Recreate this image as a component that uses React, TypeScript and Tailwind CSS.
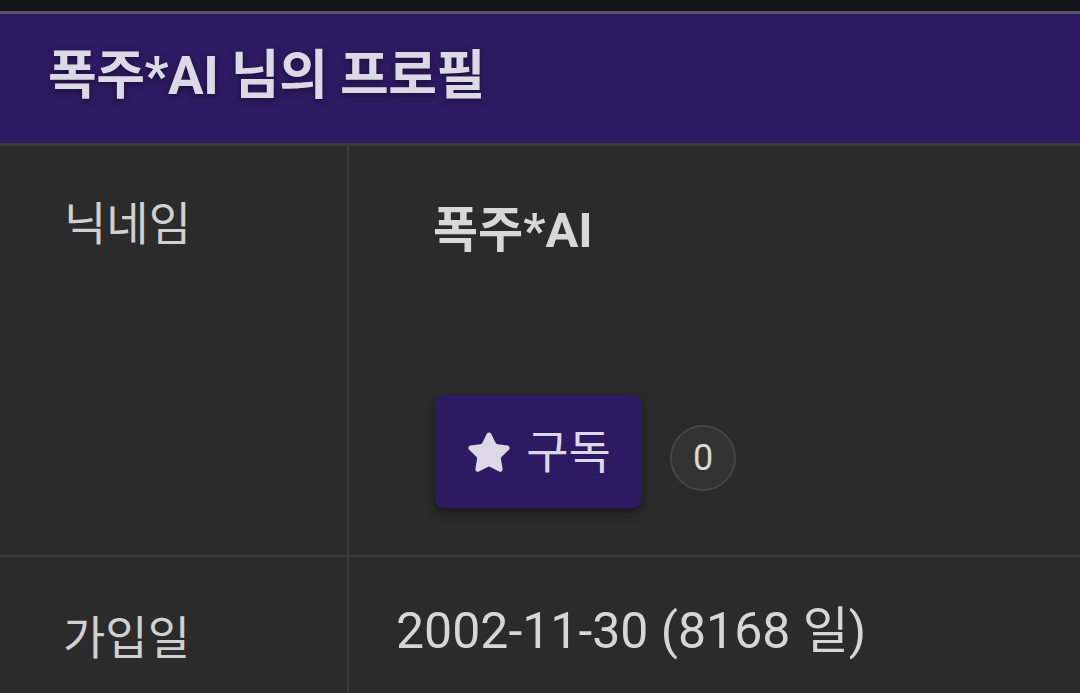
import { Star } from "lucide-react";

export default function App() {
    return (
        <div className="w-[1080px] h-[693px] overflow-hidden bg-[#2b2b2b] text-[#d6d6d6]" style={{ fontFamily: 'Roboto, "Noto Sans CJK KR", sans-serif' }}>
            <div className="h-[11px] bg-[#141518]" />
            <div className="h-[3px] bg-[#57536b]" />
            {/* header */}
            <div className="h-[132px] bg-[#2e1a62] border-b-[3px] border-[#3a3a3d] flex items-center px-[48px] pb-[4px]">
                <h1 className="text-[53px] font-bold text-[#dcd9e6] tracking-[-0.5px] [text-shadow:0_2px_6px_rgba(0,0,0,0.45)]">폭주*AI 님의 프로필</h1>
            </div>

            {/* nickname row */}
            <div className="flex h-[411px] border-b-[2px] border-[#3a3a3a]">
                <div className="w-[349px] border-r-[2px] border-[#3a3a3a] pl-[64px] pt-[48px] text-[46px] leading-[60px] text-[#d0d0d0]">닉네임</div>
                <div className="flex-1 pl-[84px] pt-[55px]">
                    <div className="text-[49px] font-bold leading-[60px] text-[#d8d8d8]">폭주*AI</div>
                    <div className="flex items-start gap-[28px] mt-[134px] ml-[2px]">
                        <button className="w-[207px] h-[113px] rounded-[9px] bg-[#2e1a62] shadow-[0_4px_10px_rgba(0,0,0,0.45)] flex items-center justify-center gap-[14px] text-[#dcd8e6]">
                            <Star className="w-[46px] h-[46px] mt-[2px]" fill="currentColor" strokeWidth={1.5} />
                            <span className="text-[46px] leading-none">구독</span>
                        </button>
                        <div className="w-[66px] h-[66px] mt-[30px] rounded-full bg-[#333333] border-[2px] border-[#454545] flex items-center justify-center text-[36px] leading-none text-[#d8d8d8]">0</div>
                    </div>
                </div>
            </div>

            {/* join date row */}
            <div className="flex h-[136px]">
                <div className="w-[349px] border-r-[2px] border-[#3a3a3a] pl-[63px] pt-[51px] text-[46px] leading-[60px] text-[#d0d0d0]">가입일</div>
                <div className="flex-1 pl-[47px] pt-[44px] text-[50px] leading-[60px] text-[#d6d6d6]">2002-11-30 (8168 일)</div>
            </div>
        </div>
    );
}
